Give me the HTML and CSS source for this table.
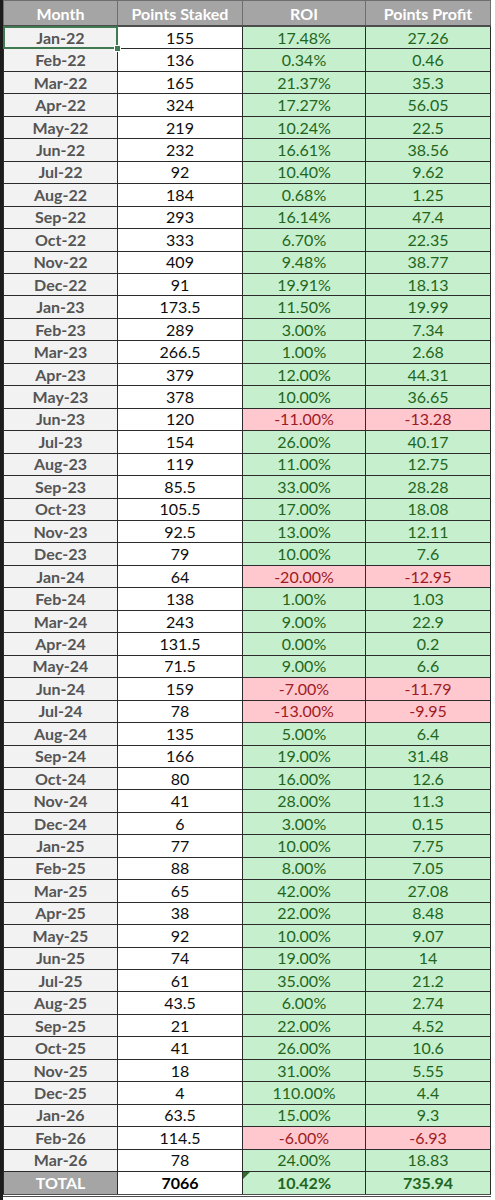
FILE: index.html
```html
<!DOCTYPE html>
<html>
<head>
<meta charset="utf-8">
<link rel="stylesheet" href="styles.css">
</head>
<body>
<div class="sheet">
<table class="grid">
<colgroup><col class="c-month"><col class="c-staked"><col class="c-roi"><col class="c-profit"></colgroup>
<thead>
<tr><th>Month</th><th>Points Staked</th><th>ROI</th><th>Points Profit</th></tr>
</thead>
<tbody>
<tr><td class="m active">Jan-22<span class="sel"></span><span class="handle"></span></td><td class="s">155</td><td class="g">17.48%</td><td class="g">27.26</td></tr>
<tr><td class="m">Feb-22</td><td class="s">136</td><td class="g">0.34%</td><td class="g">0.46</td></tr>
<tr><td class="m">Mar-22</td><td class="s">165</td><td class="g">21.37%</td><td class="g">35.3</td></tr>
<tr><td class="m">Apr-22</td><td class="s">324</td><td class="g">17.27%</td><td class="g">56.05</td></tr>
<tr><td class="m">May-22</td><td class="s">219</td><td class="g">10.24%</td><td class="g">22.5</td></tr>
<tr><td class="m">Jun-22</td><td class="s">232</td><td class="g">16.61%</td><td class="g">38.56</td></tr>
<tr><td class="m">Jul-22</td><td class="s">92</td><td class="g">10.40%</td><td class="g">9.62</td></tr>
<tr><td class="m">Aug-22</td><td class="s">184</td><td class="g">0.68%</td><td class="g">1.25</td></tr>
<tr><td class="m">Sep-22</td><td class="s">293</td><td class="g">16.14%</td><td class="g">47.4</td></tr>
<tr><td class="m">Oct-22</td><td class="s">333</td><td class="g">6.70%</td><td class="g">22.35</td></tr>
<tr><td class="m">Nov-22</td><td class="s">409</td><td class="g">9.48%</td><td class="g">38.77</td></tr>
<tr><td class="m">Dec-22</td><td class="s">91</td><td class="g">19.91%</td><td class="g">18.13</td></tr>
<tr><td class="m">Jan-23</td><td class="s">173.5</td><td class="g">11.50%</td><td class="g">19.99</td></tr>
<tr><td class="m">Feb-23</td><td class="s">289</td><td class="g">3.00%</td><td class="g">7.34</td></tr>
<tr><td class="m">Mar-23</td><td class="s">266.5</td><td class="g">1.00%</td><td class="g">2.68</td></tr>
<tr><td class="m">Apr-23</td><td class="s">379</td><td class="g">12.00%</td><td class="g">44.31</td></tr>
<tr><td class="m">May-23</td><td class="s">378</td><td class="g">10.00%</td><td class="g">36.65</td></tr>
<tr><td class="m">Jun-23</td><td class="s">120</td><td class="r">-11.00%</td><td class="r">-13.28</td></tr>
<tr><td class="m">Jul-23</td><td class="s">154</td><td class="g">26.00%</td><td class="g">40.17</td></tr>
<tr><td class="m">Aug-23</td><td class="s">119</td><td class="g">11.00%</td><td class="g">12.75</td></tr>
<tr><td class="m">Sep-23</td><td class="s">85.5</td><td class="g">33.00%</td><td class="g">28.28</td></tr>
<tr><td class="m">Oct-23</td><td class="s">105.5</td><td class="g">17.00%</td><td class="g">18.08</td></tr>
<tr><td class="m">Nov-23</td><td class="s">92.5</td><td class="g">13.00%</td><td class="g">12.11</td></tr>
<tr><td class="m">Dec-23</td><td class="s">79</td><td class="g">10.00%</td><td class="g">7.6</td></tr>
<tr><td class="m">Jan-24</td><td class="s">64</td><td class="r">-20.00%</td><td class="r">-12.95</td></tr>
<tr><td class="m">Feb-24</td><td class="s">138</td><td class="g">1.00%</td><td class="g">1.03</td></tr>
<tr><td class="m">Mar-24</td><td class="s">243</td><td class="g">9.00%</td><td class="g">22.9</td></tr>
<tr><td class="m">Apr-24</td><td class="s">131.5</td><td class="g">0.00%</td><td class="g">0.2</td></tr>
<tr><td class="m">May-24</td><td class="s">71.5</td><td class="g">9.00%</td><td class="g">6.6</td></tr>
<tr><td class="m">Jun-24</td><td class="s">159</td><td class="r">-7.00%</td><td class="r">-11.79</td></tr>
<tr><td class="m">Jul-24</td><td class="s">78</td><td class="r">-13.00%</td><td class="r">-9.95</td></tr>
<tr><td class="m">Aug-24</td><td class="s">135</td><td class="g">5.00%</td><td class="g">6.4</td></tr>
<tr><td class="m">Sep-24</td><td class="s">166</td><td class="g">19.00%</td><td class="g">31.48</td></tr>
<tr><td class="m">Oct-24</td><td class="s">80</td><td class="g">16.00%</td><td class="g">12.6</td></tr>
<tr><td class="m">Nov-24</td><td class="s">41</td><td class="g">28.00%</td><td class="g">11.3</td></tr>
<tr><td class="m">Dec-24</td><td class="s">6</td><td class="g">3.00%</td><td class="g">0.15</td></tr>
<tr><td class="m">Jan-25</td><td class="s">77</td><td class="g">10.00%</td><td class="g">7.75</td></tr>
<tr><td class="m">Feb-25</td><td class="s">88</td><td class="g">8.00%</td><td class="g">7.05</td></tr>
<tr><td class="m">Mar-25</td><td class="s">65</td><td class="g">42.00%</td><td class="g">27.08</td></tr>
<tr><td class="m">Apr-25</td><td class="s">38</td><td class="g">22.00%</td><td class="g">8.48</td></tr>
<tr><td class="m">May-25</td><td class="s">92</td><td class="g">10.00%</td><td class="g">9.07</td></tr>
<tr><td class="m">Jun-25</td><td class="s">74</td><td class="g">19.00%</td><td class="g">14</td></tr>
<tr><td class="m">Jul-25</td><td class="s">61</td><td class="g">35.00%</td><td class="g">21.2</td></tr>
<tr><td class="m">Aug-25</td><td class="s">43.5</td><td class="g">6.00%</td><td class="g">2.74</td></tr>
<tr><td class="m">Sep-25</td><td class="s">21</td><td class="g">22.00%</td><td class="g">4.52</td></tr>
<tr><td class="m">Oct-25</td><td class="s">41</td><td class="g">26.00%</td><td class="g">10.6</td></tr>
<tr><td class="m">Nov-25</td><td class="s">18</td><td class="g">31.00%</td><td class="g">5.55</td></tr>
<tr><td class="m">Dec-25</td><td class="s">4</td><td class="g">110.00%</td><td class="g">4.4</td></tr>
<tr><td class="m">Jan-26</td><td class="s">63.5</td><td class="g">15.00%</td><td class="g">9.3</td></tr>
<tr><td class="m">Feb-26</td><td class="s">114.5</td><td class="r">-6.00%</td><td class="r">-6.93</td></tr>
<tr><td class="m">Mar-26</td><td class="s">78</td><td class="g">24.00%</td><td class="g">18.83</td></tr>
</tbody>
<tfoot>
<tr class="total"><td class="tm">TOTAL</td><td class="s">7066</td><td class="g flag">10.42%</td><td class="g">735.94</td></tr>
</tfoot>
</table>
</div>
</body>
</html>
```
FILE: styles.css
```css
html, body {
  margin: 0;
  padding: 0;
  background: #ffffff;
}
body {
  font-family: Lato, "Open Sans", "Liberation Sans", sans-serif;
}
.sheet {
  width: 491px;
  border-left: 3px solid #1c1c1c;
  height: 1200px;
  box-sizing: border-box;
  background: #ffffff;
}
.grid {
  border-collapse: collapse;
  table-layout: fixed;
  width: 488px;
  font-size: 16px;
}
.c-month { width: 114px; }
.c-staked { width: 125px; }
.c-roi { width: 123px; }
.c-profit { width: 125px; }
.grid th {
  height: 24px;
  background: #a5a5a5;
  color: #ffffff;
  font-weight: 700;
  font-size: 16px;
  border: 1px solid #6e6e6e;
  border-bottom: 2px solid #4d4d4d;
  padding: 0;
  text-align: center;
}
.grid td {
  height: 21.46px;
  padding: 0;
  text-align: center;
  border: 1px solid #2b2b2b;
  line-height: 20px;
}
.grid td.m {
  background: #f2f2f2;
  color: #555555;
  font-weight: 700;
}
.grid td.s {
  background: #ffffff;
  color: #0d0d0d;
}
.grid td.g {
  background: #c6efce;
  color: #1f661c;
}
.grid td.r {
  background: #ffc7ce;
  color: #9c1c24;
}
.grid td.active {
  position: relative;
}
.sel {
  position: absolute;
  left: -1px;
  top: -1px;
  right: -1px;
  bottom: -1px;
  border: 2px solid #3f7a52;
  pointer-events: none;
}
.handle {
  position: absolute;
  right: -4px;
  bottom: -4px;
  width: 5px;
  height: 5px;
  background: #3f7a52;
  border: 1px solid #ffffff;
}
.total td {
  font-weight: 700;
  border-bottom: 3px double #4d4d4d;
}
.grid td.tm {
  background: #a5a5a5;
  color: #ffffff;
  font-weight: 700;
}
.total td.s {
  color: #000000;
}
.grid td.flag {
  position: relative;
}
.grid td.flag::before {
  content: "";
  position: absolute;
  left: 0;
  top: 0;
  border-top: 7px solid #2f6b2a;
  border-right: 7px solid transparent;
}
```
